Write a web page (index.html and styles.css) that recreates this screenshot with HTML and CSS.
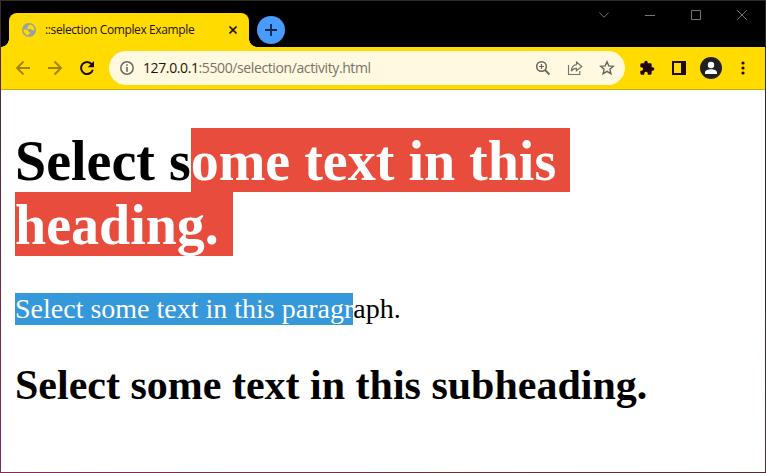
FILE: index.html
```html
<!DOCTYPE html>
<html lang="en">
<head>
<meta charset="utf-8">
<title>::selection Complex Example</title>
<link rel="stylesheet" href="styles.css">
</head>
<body>
<div class="window">
  <header class="tabstrip">
    <div class="tab">
      <svg class="favicon" width="14" height="14" viewBox="0 0 14 14"><circle cx="7" cy="7" r="7" fill="#9aa0a6"/><path d="M8.300 1.600C7 2 6.300 2.600 6.300 3.500c0 .8-.8 1-1.500 1.300 0 .7.500 1.200 1.300 1.200h2.500c1 0 1 1.300 2 1.300h1.800C12.600 4.800 11 2.200 8.300 1.600zM1.500 6.500c0 3.100 2.200 5.500 5 5.900v-1.300c.9 0 1.600-.5 1.600-1.300 0-.7-.6-.9-1.400-.9-.2-1.300-1-2.400-2.300-2.400z" fill="#ffdb00"/></svg>
      <span class="tab-title">::selection Complex Example</span>
      <svg class="tab-close" width="8" height="8" viewBox="0 0 8 8"><path d="M.5.5l7 7M7.500.5l-7 7" stroke="#22120f" stroke-width="1.600"/></svg>
    </div>
    <div class="new-tab"><svg width="12" height="12" viewBox="0 0 12 12"><path d="M6 0v12M0 6h12" stroke="#152640" stroke-width="1.800"/></svg></div>
    <div class="controls">
      <span><svg width="10" height="6" viewBox="0 0 10 6"><path d="M.3.500L5 5.200 9.700.5"/></svg></span>
      <span><svg width="10" height="2" viewBox="0 0 10 2"><path d="M0 1.500h10"/></svg></span>
      <span><svg width="10" height="10" viewBox="0 0 10 10"><path d="M.5.500h9v9h-9z"/></svg></span>
      <span><svg width="10" height="10" viewBox="0 0 10 10"><path d="M.2.200l9.600 9.600M9.800.2L.2 9.800"/></svg></span>
    </div>
  </header>
  <nav class="toolbar">
    <span class="cell"><svg width="16" height="16" viewBox="0 0 16 16"><path d="M15 8H2.200M8.500 1.500L2 8l6.500 6.500" fill="none" stroke="#a1830d" stroke-width="1.900"/></svg></span>
    <span class="cell"><svg width="16" height="16" viewBox="0 0 16 16"><path d="M1 8h12.800M7.500 1.500L14 8l-6.500 6.500" fill="none" stroke="#a1830d" stroke-width="1.900"/></svg></span>
    <span class="cell"><svg width="16" height="16" viewBox="0 0 16 16"><path d="M12.700 4.200A6 6 0 1 0 13.800 9.700" fill="none" stroke="#22060f" stroke-width="2"/><path d="M15 1v6.300H8.700z" fill="#22060f"/></svg></span>
    <div class="address">
      <span class="info"><svg width="14" height="14" viewBox="0 0 14 14"><circle cx="7" cy="7" r="6.200" fill="none" stroke="#68686a" stroke-width="1.500"/><path d="M7 3.200v1.600M7 6v4.700" stroke="#68686a" stroke-width="1.600"/></svg></span>
      <span class="url"><b>127.0.0.1</b>:5500/selection/activity.html</span>
      <span class="cell"><svg width="16" height="16" viewBox="0 0 16 16"><circle cx="6.500" cy="6.500" r="4.800" fill="none" stroke="#66645f" stroke-width="1.500"/><path d="M10 10l4.500 4.500" stroke="#66645f" stroke-width="1.800"/><path d="M6.500 4v5M4 6.500h5" stroke="#66645f" stroke-width="1.200"/></svg></span>
      <span class="cell"><svg width="16" height="16" viewBox="0 0 16 16"><path d="M1.500 5v9.500h11.300V11" fill="none" stroke="#74726c" stroke-width="1.100"/><path d="M9.500 2l5.300 4.500-5.300 4.300V8.300c-2.500 0-4 .7-5.300 2.800.3-3.400 2-6 5.300-6.500z" fill="none" stroke="#74726c" stroke-width="1.200"/></svg></span>
      <span class="cell"><svg width="16" height="16" viewBox="0 0 16 16"><path d="M8 1.800l1.800 4.100 4.500.4-3.400 3 1 4.400L8 11.400l-3.900 2.300 1-4.400-3.400-3 4.500-.4z" fill="none" stroke="#66645f" stroke-width="1.400"/></svg></span>
    </div>
    <span class="cell"><svg width="16" height="16" viewBox="0 0 24 24"><path fill="#22060f" d="M20.500 11H19V7a2 2 0 0 0-2-2h-4V3.500a2.500 2.500 0 0 0-5 0V5H4a2 2 0 0 0-2 2v3.800h1.500a2.700 2.700 0 0 1 0 5.400H2V20a2 2 0 0 0 2 2h3.800v-1.500a2.700 2.700 0 0 1 5.400 0V22H17a2 2 0 0 0 2-2v-4h1.500a2.500 2.500 0 0 0 0-5z"/></svg></span>
    <span class="cell"><svg width="14" height="14" viewBox="0 0 14 14"><path fill="#22060f" fill-rule="evenodd" d="M0 0h14v14H0zM2 2v10h7V2z"/></svg></span>
    <span class="cell"><svg width="22" height="22" viewBox="0 0 22 22"><circle cx="11" cy="11" r="11" fill="#202124"/><circle cx="11" cy="8" r="3.200" fill="#fff"/><path d="M5 17v-1.500c0-2 3.500-3.200 6-3.200s6 1.200 6 3.200V17z" fill="#fff"/></svg></span>
    <span class="cell"><svg width="4" height="14" viewBox="0 0 4 14"><g fill="#22060f"><circle cx="2" cy="2" r="1.600"/><circle cx="2" cy="7" r="1.600"/><circle cx="2" cy="12" r="1.600"/></g></svg></span>
  </nav>
  <main class="page">
    <h1>Select s<span class="marked-red">ome text in this&nbsp;</span><br><span class="marked-red">heading.&nbsp;</span></h1>
    <p><span class="marked-blue">Select some text in this paragr</span>aph.</p>
    <h2>Select some text in this subheading.</h2>
  </main>
</div>
</body>
</html>
```

FILE: styles.css
```css
* { box-sizing: border-box; }
body { margin: 0; background: #fff; }
svg { display: block; flex: none; }
.window {
  width: 766px;
  height: 473px;
  overflow: hidden;
  border: 1px solid;
  border-image: linear-gradient(205deg, #2b2b2b 35%, #6b3038 75%, #812c60) 1;
  font-family: "Open Sans", "Noto Sans", sans-serif;
}
.tabstrip {
  display: flex;
  height: 46px;
  padding-left: 8px;
  background: #000;
}
.tab {
  position: relative;
  display: flex;
  align-items: center;
  width: 240px;
  height: 34px;
  margin-top: 12px;
  padding: 0 12px 0 13px;
  border-radius: 8px 8px 0 0;
  background: #ffdb00;
}
.tab::before, .tab::after {
  content: "";
  position: absolute;
  bottom: 0;
  width: 8px;
  height: 8px;
}
.tab::before { left: -8px; background: radial-gradient(circle at 0 0, #000 7.500px, #ffdb00 8px); }
.tab::after { right: -8px; background: radial-gradient(circle at 100% 0, #000 7.500px, #ffdb00 8px); }
.tab-title {
  margin-left: 9px;
  font-size: 12px;
  line-height: 16px;
  letter-spacing: -0.380px;
  white-space: nowrap;
  color: #22120f;
}
.tab-close { margin-left: auto; }
.new-tab {
  display: flex;
  align-items: center;
  justify-content: center;
  width: 28px;
  height: 28px;
  margin: 15px 0 0 8px;
  border-radius: 50%;
  background: #489bff;
}
.controls { display: flex; height: 28px; margin-left: auto; }
.controls span {
  display: flex;
  align-items: center;
  justify-content: center;
  width: 46px;
}
.controls path { fill: none; stroke: #777; stroke-width: 1; }
.toolbar {
  display: flex;
  align-items: center;
  height: 43px;
  padding: 0 6px;
  border-bottom: 1px solid #c9ad10;
  background: #ffdb00;
}
.cell {
  display: flex;
  align-items: center;
  justify-content: center;
  flex: none;
  width: 32px;
}
.address {
  display: flex;
  align-items: center;
  flex: 1;
  height: 34px;
  margin: 0 6px;
  padding: 0 2px 0 11px;
  border-radius: 17px;
  background: #fff9df;
}
.url {
  flex: 1;
  margin-left: 9px;
  font-size: 14px;
  line-height: 20px;
  letter-spacing: -0.390px;
  white-space: nowrap;
  color: #77736a;
}
.url b { font-weight: 400; color: #22120f; }
.page {
  display: flow-root;
  height: 382px;
  padding: 0 14px;
  background: #fff;
  color: #000;
  font-family: "Liberation Serif", "Times New Roman", serif;
}
h1, h2, p { white-space: nowrap; }
h1 { margin: 38px 0 37px; font-size: 56px; line-height: 62px; }
p { margin: 0 0 36px; font-size: 28px; line-height: 32px; }
h2 { margin: 0; font-size: 42px; line-height: 48px; }
.marked-red, .marked-blue { display: inline-block; color: #fff; }
.marked-red { padding-top: 2px; background: #e74c3c; }
.marked-blue { background: #3498db; }
```
